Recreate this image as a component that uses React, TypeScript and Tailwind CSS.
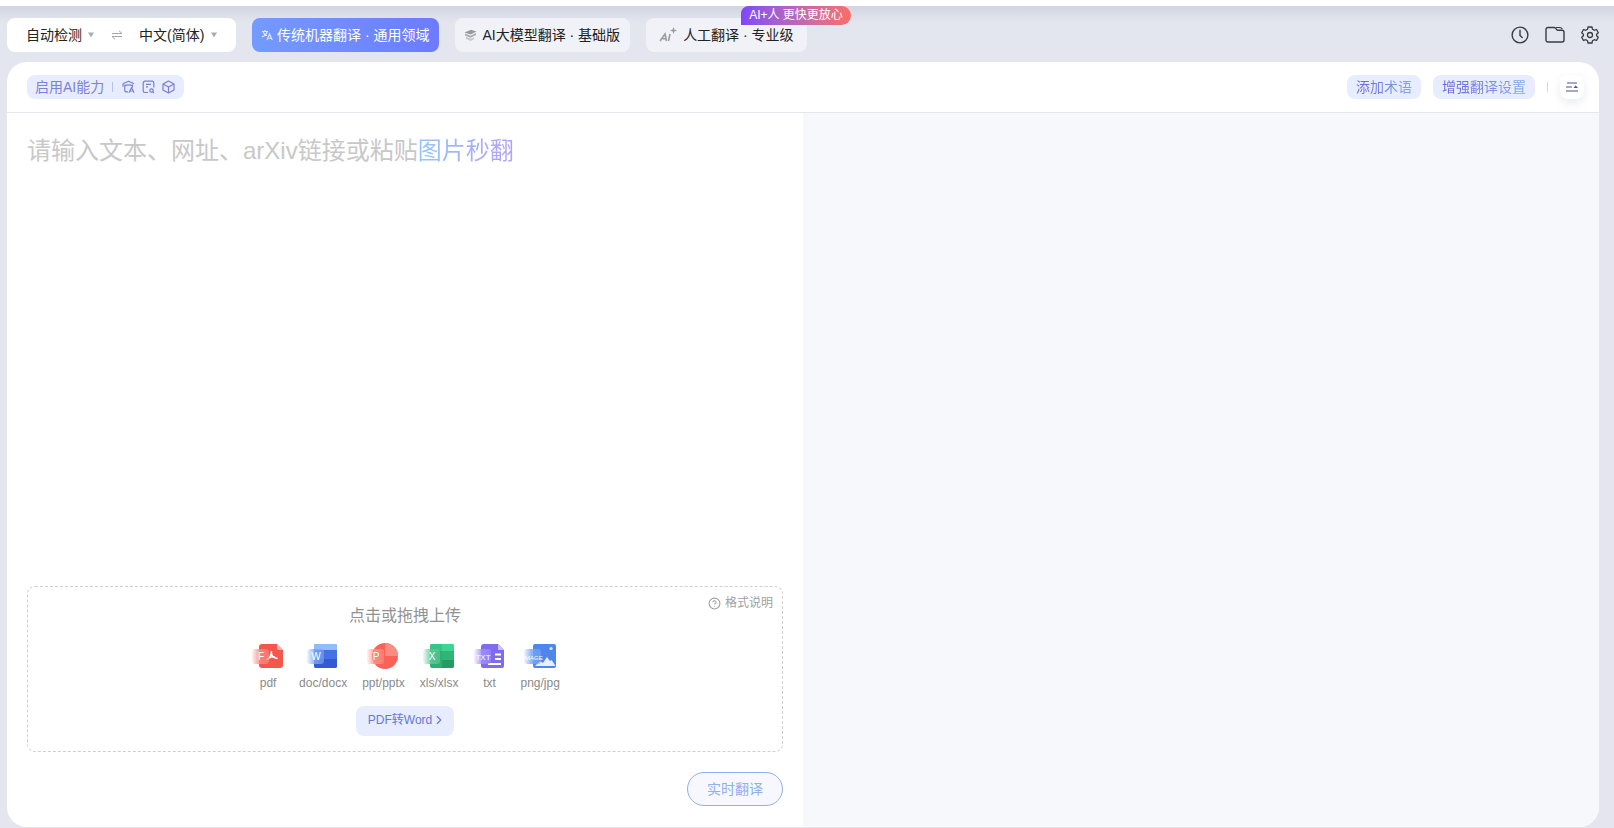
import type { ReactNode } from "react";
import { ChevronRight, CircleHelp } from "lucide-react";

function Caret() {
  return (
    <svg width="8" height="6" viewBox="0 0 8 6" className="pointer-events-none shrink-0" aria-hidden="true">
      <path d="M1 0.5h6L4 5.5z" fill="#a9aab6" />
    </svg>
  );
}

function SwapIcon() {
  return (
    <svg width="12" height="10" viewBox="0 0 12 10" fill="none" stroke="#a3a5b5" strokeWidth="1" aria-hidden="true">
      <path d="M1 3.5h10L8 0.8M11 6.5H1l3 2.7" />
    </svg>
  );
}

function TranslateIcon() {
  return (
    <svg width="12" height="12" viewBox="0 0 12 12" fill="none" stroke="#e3e9ff" strokeWidth="1.1" aria-hidden="true">
      <path d="M1 2.5h6M4 1v1.5M2 2.5c.6 2 2.2 3.6 4 4.2M6.2 2.5C5.6 5 3.5 7 1 8M6 11l2.6-6 2.6 6M6.9 9.2h3.4" />
    </svg>
  );
}

function LayersIcon() {
  return (
    <svg width="13" height="13" viewBox="0 0 13 13" aria-hidden="true">
      <path d="M0.5 3.5 7 0.8l5.5 1.8L6.5 5.5z" fill="#97999f" />
      <path d="M1 4.6 6.5 6.7 12 4v2L6.5 8.8 1 6.6z" fill="#aaacb3" />
      <path d="M2 7.6 6.5 9.8 10 8.2v2L6.5 12 2 9.8z" fill="#c6c8ce" />
    </svg>
  );
}

function AiPlusIcon() {
  return (
    <svg width="18" height="16" viewBox="0 0 18 16" fill="none" stroke="#9b9da3" strokeWidth="1.6" aria-hidden="true">
      <path d="M1 14 6 7l1.5 7M3.5 11.8H7M11 7l-1.5 7" />
      <path d="M14.5 0l.9 2.6 2.6.9-2.6.9-.9 2.600-.9-2.600-2.600-.9 2.600-.9z" fill="#9b9da3" stroke="none" />
    </svg>
  );
}

function ClockIcon() {
  return (
    <svg width="18" height="18" viewBox="0 0 18 18" fill="none" stroke="#3a3b42" strokeWidth="1.4" strokeLinecap="round" aria-hidden="true">
      <circle cx="9" cy="9" r="7.9" />
      <path d="M9 4.2v5.3l2.2 2" />
    </svg>
  );
}

function FolderIcon() {
  return (
    <svg width="20" height="18" viewBox="0 0 20 18" fill="none" stroke="#3a3b42" strokeWidth="1.4" strokeLinejoin="round" aria-hidden="true">
      <path d="M1 3.5a2 2 0 0 1 2-2h6.2q.8 0 1.3.6l1.2 1.5q.5.6 1.3.6H17a2 2 0 0 1 2 2V14a2 2 0 0 1-2 2H3a2 2 0 0 1-2-2z" />
      <path d="M11.5 1.5h3q1.500 0 2.500 1.200" strokeWidth="1.2" strokeLinecap="round" />
    </svg>
  );
}

function GearIcon() {
  return (
    <svg width="18" height="18" viewBox="0 0 18 18" fill="none" stroke="#3a3b42" strokeWidth="1.3" strokeLinejoin="round" aria-hidden="true">
      <path d="M7 1h4l.5 2.3 1.7 1 2.3-.8 1.8 3.3-1.700 1.400v1.600l1.700 1.500-1.800 3.200-2.300-.8-1.700 1L11 17H7l-.5-2.300-1.700-1-2.300.8-1.800-3.200 1.700-1.500V8.200L.7 6.800l1.800-3.300 2.300.8 1.700-1z" />
      <circle cx="9" cy="9" r="2.5" />
    </svg>
  );
}

function AiSkillIcons() {
  return (
    <span className="flex items-center gap-[7px]">
      <svg width="13" height="14" viewBox="0 0 13 14" fill="none" stroke="#7a7ed6" strokeWidth="1.2" strokeLinejoin="round" aria-hidden="true">
        <path d="M1 3.8l5.500-2.600L12 3.800M1 3.800v3M2.800 4.500v6q0 1.300 1.300 1.300H6M2.800 5.800q3.700-2 7.400 0M10.400 4.500v3M7 12.800 9.500 7.500l2.500 5.300M8 11h3" />
      </svg>
      <svg width="13" height="14" viewBox="0 0 13 14" fill="none" stroke="#7a7ed6" strokeWidth="1.2" aria-hidden="true">
        <path d="M6 12.500H3A1.800 1.800 0 0 1 1.200 10.700V3A1.800 1.800 0 0 1 3 1.200h7A1.800 1.800 0 0 1 11.800 3v4.500M4 4.300h5M4 6.800h2" />
        <circle cx="9.500" cy="10.500" r="1.700" />
        <path d="m10.800 11.800 1.200 1.200" />
      </svg>
      <svg width="13" height="14" viewBox="0 0 13 14" fill="none" stroke="#7a7ed6" strokeWidth="1.2" strokeLinejoin="round" aria-hidden="true">
        <path d="m6.500 1 5.500 3v6l-5.500 3L1 10V4zM1 4l5.500 3L12 4M6.500 7v6" />
      </svg>
    </span>
  );
}

const FILE_TYPES: { label: string; tag: string; from: string; art: ReactNode }[] = [
  {
    label: "pdf",
    tag: "F",
    from: "#f9897f",
    art: (
      <>
        <path d="M10 0h15l6 6v15a3 3 0 0 1-3 3H10a3 3 0 0 1-3-3V3a3 3 0 0 1 3-3z" fill="#f4564c" />
        <path d="M25 0v4a2 2 0 0 0 2 2h4z" fill="#fcb0aa" />
        <path d="M19.500 7c0 5-2 7-5 9M19.500 9c0 3 2 5 6 5.500M17 14q3-2 6-1" fill="none" stroke="#fff" strokeWidth="1.500" />
      </>
    ),
  },
  {
    label: "doc/docx",
    tag: "W",
    from: "#7ba6f6",
    art: (
      <>
        <rect x="7" y="0" width="23" height="24" rx="2" fill="#4472e4" />
        <path d="M9 0h19a2 2 0 0 1 2 2v4H7V2a2 2 0 0 1 2-2z" fill="#92bbf9" />
        <path d="M7 15h23v7a2 2 0 0 1-2 2H9a2 2 0 0 1-2-2z" fill="#3459d2" />
      </>
    ),
  },
  {
    label: "ppt/pptx",
    tag: "P",
    from: "#fb9187",
    art: (
      <>
        <circle cx="18" cy="12" r="13" fill="#fb6157" />
        <path d="M18 12V-1a13 13 0 0 1 13 13z" fill="#fc8b82" />
      </>
    ),
  },
  {
    label: "xls/xlsx",
    tag: "X",
    from: "#5fc999",
    art: (
      <>
        <rect x="7" y="0" width="24" height="24" rx="2" fill="#2fae72" />
        <path d="M19 0h10a2 2 0 0 1 2 2v5H19z" fill="#3ed491" />
        <path d="M9 0h10v7H7V2a2 2 0 0 1 2-2z" fill="#35c584" />
        <path d="M19 7h12v9H19z" fill="#2fb677" />
        <path d="M19 16h12v6a2 2 0 0 1-2 2H19z" fill="#259a62" />
      </>
    ),
  },
  {
    label: "txt",
    tag: "TXT",
    from: "#a08ff8",
    art: (
      <>
        <path d="M10 0h14l6 6v16a2 2 0 0 1-2 2H9a2 2 0 0 1-2-2V3a3 3 0 0 1 3-3z" fill="#806bf0" />
        <path d="M24 0v6h6z" fill="#c9bffc" />
        <path d="M21 10.500h6M21 15h6M14 20h13" stroke="#fff" strokeWidth="1.800" />
      </>
    ),
  },
  {
    label: "png/jpg",
    tag: "IMAGE",
    from: "#76a5f6",
    art: (
      <>
        <rect x="9" y="0" width="23" height="24" rx="2" fill="#4f86ee" />
        <circle cx="27" cy="4.500" r="1.600" fill="#dbe8ff" />
        <path d="m11 22 5-5 3 2 4-6 3 4 1.500-1L31 21v1z" fill="#e9f1ff" />
      </>
    ),
  },
];

function FileIcon({ tag, from, art }: { tag: string; from: string; art: ReactNode }) {
  const id = `tag-${tag}`;
  return (
    <svg width="32" height="28" viewBox="0 -1 32 28" className="overflow-visible" aria-hidden="true">
      <defs>
        <linearGradient id={id}>
          <stop offset="0" stopColor={from} stopOpacity="0.1" />
          <stop offset="0.45" stopColor={from} stopOpacity="0.85" />
          <stop offset="1" stopColor={from} stopOpacity="0.6" />
        </linearGradient>
      </defs>
      {art}
      <rect x="0" y="5" width="17" height="15" rx="3" fill={`url(#${id})`} />
      <text
        x="9"
        y="16"
        textAnchor="middle"
        fill="#fff"
        fontFamily="Liberation Sans, sans-serif"
        fontSize={tag.length > 3 ? 6 : tag.length > 1 ? 8 : 10}
      >
        {tag}
      </text>
    </svg>
  );
}

function LanguageSelect({ label, value, className }: { label: string; value: string; className: string }) {
  return (
    <div className="flex items-center">
      <select
        aria-label={label}
        className={`h-8 appearance-none overflow-visible bg-transparent text-sm text-[#222] outline-none ${className}`}
      >
        <option>{value}</option>
      </select>
      <Caret />
    </div>
  );
}

export default function App() {
  return (
    <div className="flex min-h-screen flex-col border-t-[6px] border-white bg-[#e4e5ee] font-['Liberation_Sans','Noto_Sans_CJK_SC',sans-serif] text-sm">
      {/* Top bar */}
      <header className="flex h-14 items-center bg-linear-to-b from-[#d2d5e1] to-[#e4e6ef] to-30% pt-0.5 pr-[15px] pl-[7px]">
        <div className="flex h-[34px] w-[229px] items-center rounded-lg bg-white pl-[19px]">
          <LanguageSelect label="源语言" value="自动检测" className="w-[61px]" />
          <button type="button" aria-label="交换语言" className="mx-4">
            <SwapIcon />
          </button>
          <LanguageSelect label="目标语言" value="中文(简体)" className="w-[71px]" />
        </div>

        <nav className="ml-4 flex gap-4">
          <button
            type="button"
            className="flex h-[34px] items-center gap-1 rounded-lg bg-linear-to-r from-[#749bfd] to-[#6c7bfd] pr-2.5 pl-[9px] text-white"
          >
            <TranslateIcon />
            传统机器翻译 · 通用领域
          </button>
          <button type="button" className="flex h-[34px] items-center gap-[5px] rounded-lg bg-[#f1f2f7] pr-2.5 pl-[9px] text-[#222]">
            <LayersIcon />
            AI大模型翻译 · 基础版
          </button>
          <button
            type="button"
            className="relative flex h-[34px] items-center gap-1.5 rounded-lg bg-[#f1f2f7] px-[13px] text-[#222]"
          >
            <AiPlusIcon />
            人工翻译 · 专业级
            <span className="absolute -top-3 left-[95px] h-[19px] rounded-l-lg rounded-r-[10px] rounded-bl-none bg-linear-to-r from-[#8145f8] to-[#fb6d62] px-2 text-xs leading-[18px] whitespace-nowrap text-white">
              AI+人 更快更放心
            </span>
          </button>
        </nav>

        <div className="ml-auto flex items-center gap-4">
          <button type="button" aria-label="历史记录">
            <ClockIcon />
          </button>
          <button type="button" aria-label="文件夹">
            <FolderIcon />
          </button>
          <button type="button" aria-label="设置">
            <GearIcon />
          </button>
        </div>
      </header>

      {/* Workspace */}
      <main className="mr-[15px] mb-px ml-[7px] flex grow flex-col overflow-hidden rounded-[20px] bg-white">
        <div className="flex h-[51px] items-center border-b border-[#e6e7ee] pr-[15px] pl-5">
          <button type="button" className="flex h-6 items-center rounded-lg bg-[#e7edfe] pr-[9px] pl-2 text-[#7d80d8]">
            启用AI能力
            <span className="mr-[9px] ml-2 h-2.5 w-px bg-[#b9bfe8]" />
            <AiSkillIcons />
          </button>

          <div className="ml-auto flex items-center gap-3">
            <button type="button" className="h-6 rounded-lg bg-[#e7edfe] px-[9px]">
              <span className="bg-linear-to-r from-[#6a63d6] to-[#86a8ea] bg-clip-text text-transparent">添加术语</span>
            </button>
            <button type="button" className="h-6 rounded-lg bg-[#e7edfe] px-[9px]">
              <span className="bg-linear-to-r from-[#6a63d6] to-[#86a8ea] bg-clip-text text-transparent">增强翻译设置</span>
            </button>
            <span className="h-2.5 w-px bg-[#d5d6de]" />
            <button
              type="button"
              aria-label="更多选项"
              className="flex h-6 w-6 items-center justify-center rounded-lg bg-white shadow-[0_4px_10px_rgba(60,70,120,0.1)]"
            >
              <svg width="12" height="10" viewBox="0 0 12 10" aria-hidden="true">
                <path d="M1 1h10M0 5h6M0 9h12" stroke="#4e5190" strokeWidth="1.2" />
                <path d="M7.500 6 9.700 3.500 12 6z" fill="#4e5190" />
              </svg>
            </button>
          </div>
        </div>

        <div className="grid grow grid-cols-2">
          {/* Source side */}
          <section className="flex flex-col px-5 pt-5 pb-[21px]">
            <div className="relative flex grow">
              <textarea id="source" className="w-full grow resize-none bg-transparent text-2xl outline-none" />
              <label htmlFor="source" className="pointer-events-none absolute top-0 left-0 text-2xl leading-9 text-[#c8c8c8]">
                请输入文本、网址、arXiv链接或粘贴
                <span className="bg-linear-to-r from-[#94c4fa] to-[#b3a0f8] bg-clip-text text-transparent">图片秒翻</span>
              </label>
            </div>

            <div className="relative flex h-[166px] flex-col items-center rounded-lg border border-dashed border-[#cfcfd2] pt-[17px]">
              <a href="#formats" className="absolute top-2 right-[9px] flex items-center gap-1 text-xs text-[#a0a0a0]">
                <CircleHelp size={13} strokeWidth={2} />
                格式说明
              </a>
              <p className="text-base text-[#919191]">点击或拖拽上传</p>
              <ul className="mt-[15px] flex gap-[15px] pl-0.5 text-xs text-[#8a8a8a]">
                {FILE_TYPES.map((file) => (
                  <li key={file.label} className="flex flex-col items-center gap-1">
                    <FileIcon tag={file.tag} from={file.from} art={file.art} />
                    {file.label}
                  </li>
                ))}
              </ul>
              <button
                type="button"
                className="mt-[15px] flex h-[30px] items-center rounded-lg bg-[#e7edfe] pr-2 pb-0.5 pl-3 text-xs text-[#6478d8]"
              >
                PDF转Word
                <ChevronRight size={14} strokeWidth={2} />
              </button>
            </div>

            <button
              type="button"
              className="mt-5 h-[34px] w-24 self-end rounded-full border border-[#8eb0ec] bg-[#f7f8fe] text-[#8eb0ec]"
            >
              实时翻译
            </button>
          </section>

          {/* Result side */}
          <section className="bg-[#f7f8fc]" aria-label="译文" />
        </div>
      </main>
    </div>
  );
}
